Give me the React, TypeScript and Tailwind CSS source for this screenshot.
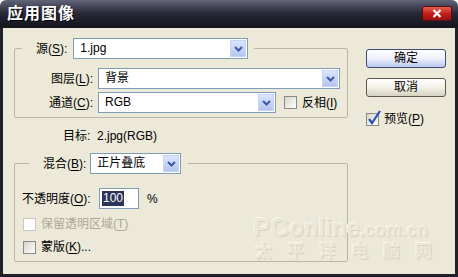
import type { ReactNode } from "react";

const FONT = "font-['Liberation_Sans','Noto_Sans_CJK_SC',sans-serif]";

const Chevron = () => (
    <svg width="9" height="6" viewBox="0 0 9 6">
        <path d="M1 1 L4.5 4.5 L8 1" fill="none" stroke="#3d58a8" strokeWidth="2" />
    </svg>
);

const Dropdown = ({ value, width }: { value: string; width: string }) => (
    <div className={`flex h-[21px] ${width} border border-[#7f9db9] bg-white`}>
        <div className="flex-1 pl-[6px] leading-[19px] text-black">{value}</div>
        <div className="m-[1px] w-[16px] flex items-center justify-center border border-[#c6d3f5] bg-gradient-to-b from-[#dbe4fb] to-[#b7c6ee]">
            <Chevron />
        </div>
    </div>
);

const Checkbox = ({ checked = false, disabled = false, children }: { checked?: boolean; disabled?: boolean; children: ReactNode }) => (
    <div className={`flex items-center gap-[5px] ${disabled ? "text-[#aca899]" : "text-black"}`}>
        <div className={`relative w-[13px] h-[13px] border ${disabled ? "border-[#cac8bb] bg-white" : "border-[#8a8a86] bg-gradient-to-br from-[#d6d5cc] to-white"}`}>
            {checked && (
                <svg className="absolute -top-[4px] left-[0px]" width="15" height="16" viewBox="0 0 15 16">
                    <path d="M2 9 L5 13 L13 1" fill="none" stroke="#2452b5" strokeWidth="2.2" />
                </svg>
            )}
        </div>
        <span className="leading-[14px]">{children}</span>
    </div>
);

const U = ({ children }: { children: ReactNode }) => <span className="underline underline-offset-2">{children}</span>;

const App = () => {
    return (
        <div className={`w-[458px] h-[277px] flex flex-col overflow-hidden text-[12px] ${FONT}`}>
            <div className="h-[28px] flex items-center justify-between pl-[7px] pr-[6px] bg-gradient-to-b from-[#62647a] via-[#262634] to-[#15151d] rounded-t-[6px]">
                <span className="text-white font-bold text-[16px] tracking-[1px] [text-shadow:1px_1px_0_#000]">应用图像</span>
                <div className="w-[30px] h-[15px] mb-[1px] rounded-[2px] border border-[#5a1010] bg-gradient-to-b from-[#e65a4e] via-[#c81e1e] to-[#9c1010] flex items-center justify-center">
                    <svg width="10" height="9" viewBox="0 0 10 9">
                        <path d="M1.5 1 L8.5 8 M8.5 1 L1.5 8" stroke="white" strokeWidth="2.2" />
                    </svg>
                </div>
            </div>

            <div className="relative flex-1 flex bg-[#ece9d8] border-x-[3px] border-b-[3px] border-[#20202a] pt-[10px] pl-[11px]">
                <div className="w-[334px] flex flex-col">
                    <fieldset className="border border-[#b9b6a6] rounded-[2px] pt-[9px] pb-[4px] flex flex-col gap-[3px]">
                        <legend className="ml-[7px] pl-[14px] pr-[6px] flex items-center gap-[6px]">
                            <span>源(<U>S</U>):</span>
                            <Dropdown value="1.jpg" width="w-[175px]" />
                        </legend>
                        <div className="flex items-center">
                            <span className="w-[83px] pr-[5px] text-right">图层(<U>L</U>):</span>
                            <Dropdown value="背景" width="w-[242px]" />
                        </div>
                        <div className="flex items-center">
                            <span className="w-[83px] pr-[5px] text-right">通道(<U>C</U>):</span>
                            <Dropdown value="RGB" width="w-[178px]" />
                            <div className="ml-[8px]">
                                <Checkbox>反相(<U>I</U>)</Checkbox>
                            </div>
                        </div>
                    </fieldset>

                    <div className="mt-[11px] pl-[49px] leading-[14px]">目标:&nbsp;&nbsp;2.jpg(RGB)</div>

                    <fieldset className="mt-[10px] border border-[#b9b6a6] rounded-[2px] pt-[14px] pb-[7px] pl-[7px] flex flex-col">
                        <legend className="ml-[7px] pl-[14px] pr-[7px] flex items-center gap-[4px]">
                            <span>混合(<U>B</U>):</span>
                            <Dropdown value="正片叠底" width="w-[91px]" />
                        </legend>
                        <div className="flex items-center">
                            <span className="w-[77px]">不透明度(<U>O</U>):</span>
                            <div className="w-[40px] h-[21px] border border-[#7f9db9] bg-white flex items-center pl-[2px]">
                                <span className="bg-[#2b3358] text-white leading-[15px] px-[1px]">100</span>
                            </div>
                            <span className="ml-[8px]">%</span>
                        </div>
                        <div className="mt-[8px] h-[14px] pl-[1px]">
                            <Checkbox disabled>保留透明区域(<U>T</U>)</Checkbox>
                        </div>
                        <div className="mt-[9px] h-[14px] pl-[1px]">
                            <Checkbox>蒙版(<U>K</U>)...</Checkbox>
                        </div>
                    </fieldset>
                </div>

                <div className="ml-[18px] pt-[11px] flex flex-col">
                    <button className="w-[80px] h-[19px] rounded-[3px] border border-[#3c4e78] bg-gradient-to-b from-white via-[#eef1fb] to-[#b9c9ef] leading-[17px] text-black">
                        确定
                    </button>
                    <button className="mt-[10px] w-[80px] h-[19px] rounded-[3px] border border-[#5a5850] bg-gradient-to-b from-white via-[#f2f0e6] to-[#d6d2c2] leading-[17px] text-black">
                        取消
                    </button>
                    <div className="mt-[15px]">
                        <Checkbox checked>预览(<U>P</U>)</Checkbox>
                    </div>
                </div>

                <div className="absolute left-[250px] top-[188px] flex flex-col items-start text-[#ebe8d8] [text-shadow:1px_1px_1px_#d4d1bf,-1px_-1px_0_#f8f7f0] pointer-events-none select-none">
                    <div className="font-bold leading-[22px]">
                        <span className="text-[26px]">PC</span>
                        <span className="text-[24px]">online</span>
                        <span className="text-[18px]">.com.cn</span>
                    </div>
                    <div className="text-[17px] font-bold tracking-[15px] leading-[18px] pl-[2px]">太平洋电脑网</div>
                </div>
            </div>
        </div>
    );
};

export default App;
